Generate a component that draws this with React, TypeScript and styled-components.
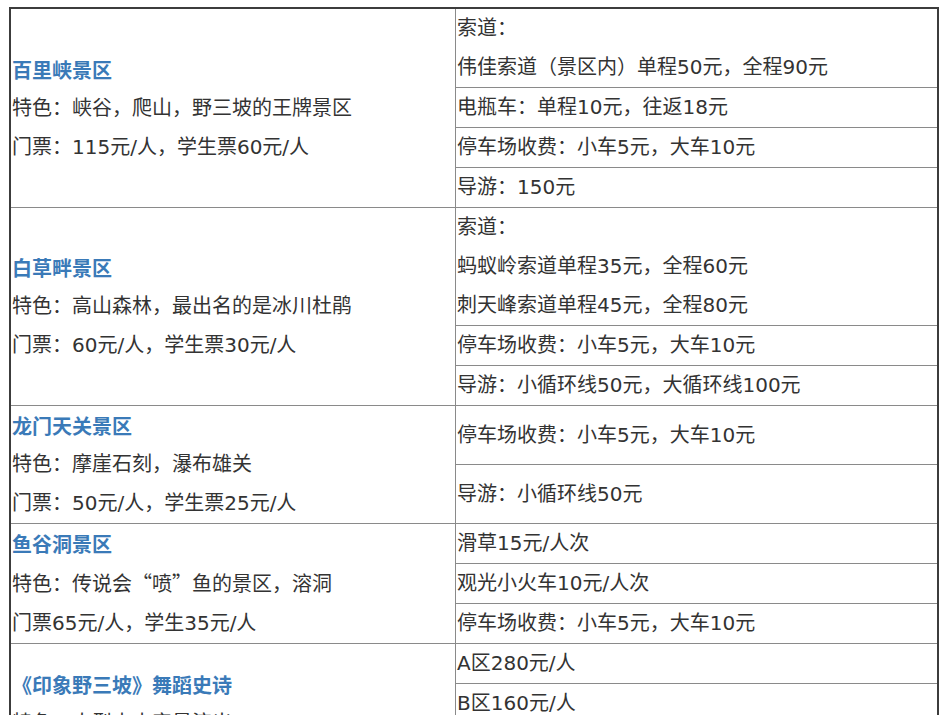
import React from 'react';
import styled, { createGlobalStyle } from 'styled-components';

const GlobalStyle = createGlobalStyle`
  html, body {
    margin: 0;
    padding: 0;
    background: #ffffff;
  }
  body {
    font-family: "DejaVu Sans", "Noto Sans CJK SC", sans-serif;
    color: #333333;
  }
`;

const Page = styled.div`
  padding: 7px 0 0 9px;
  width: 948px;
  box-sizing: border-box;
`;

const Table = styled.table`
  width: 930px;
  border-collapse: collapse;
  border: 2px solid #3c3c3c;
  table-layout: fixed;
  font-size: 20px;
  line-height: 39px;
`;

const LeftCell = styled.td`
  width: 442px;
  padding: 0 1px;
  border: 1px solid #8a8a8a;
  vertical-align: middle;
`;

const RightCell = styled.td`
  padding: 0 1px;
  border: 1px solid #8a8a8a;
  vertical-align: middle;
  white-space: nowrap;
`;

const Title = styled.div`
  color: #3a7ab8;
  font-weight: bold;
  font-family: "Noto Sans CJK SC", sans-serif;
`;

const Line = styled.div`
  white-space: nowrap;
`;

const Quote = styled.span`
  font-family: "Noto Sans CJK SC", sans-serif;
`;

type Spot = {
  title: string;
  lines: React.ReactNode[];
  items: string[][];
};

const spots: Spot[] = [
  {
    title: '百里峡景区',
    lines: ['特色：峡谷，爬山，野三坡的王牌景区', '门票：115元/人，学生票60元/人'],
    items: [
      ['索道：', '伟佳索道（景区内）单程50元，全程90元'],
      ['电瓶车：单程10元，往返18元'],
      ['停车场收费：小车5元，大车10元'],
      ['导游：150元'],
    ],
  },
  {
    title: '白草畔景区',
    lines: ['特色：高山森林，最出名的是冰川杜鹃', '门票：60元/人，学生票30元/人'],
    items: [
      ['索道：', '蚂蚁岭索道单程35元，全程60元', '刺天峰索道单程45元，全程80元'],
      ['停车场收费：小车5元，大车10元'],
      ['导游：小循环线50元，大循环线100元'],
    ],
  },
  {
    title: '龙门天关景区',
    lines: ['特色：摩崖石刻，瀑布雄关', '门票：50元/人，学生票25元/人'],
    items: [['停车场收费：小车5元，大车10元'], ['导游：小循环线50元']],
  },
  {
    title: '鱼谷洞景区',
    lines: [
      <>
        特色：传说会<Quote>“喷”</Quote>鱼的景区，溶洞
      </>,
      '门票65元/人，学生35元/人',
    ],
    items: [['滑草15元/人次'], ['观光小火车10元/人次'], ['停车场收费：小车5元，大车10元']],
  },
  {
    title: '《印象野三坡》舞蹈史诗',
    lines: ['特色：大型山水实景演出', '时间：每晚20:00开演'],
    items: [['A区280元/人'], ['B区160元/人'], ['C区120元/人'], ['D区80元/人']],
  },
];

const App = () => {
  return (
    <Page>
      <GlobalStyle />
      <Table>
        <tbody>
          {spots.map((spot) =>
            spot.items.map((item, i) => (
              <tr key={spot.title + i}>
                {i === 0 && (
                  <LeftCell rowSpan={spot.items.length}>
                    <Title>{spot.title}</Title>
                    {spot.lines.map((l, j) => (
                      <Line key={j}>{l}</Line>
                    ))}
                  </LeftCell>
                )}
                <RightCell>
                  {item.map((t) => (
                    <Line key={t}>{t}</Line>
                  ))}
                </RightCell>
              </tr>
            ))
          )}
        </tbody>
      </Table>
    </Page>
  );
};

export default App;
